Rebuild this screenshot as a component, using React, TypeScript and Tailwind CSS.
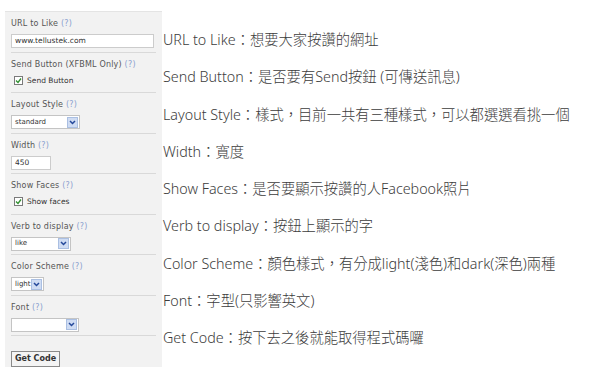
import React from 'react';

const labelFont = { fontFamily: '"DejaVu Sans", Verdana, sans-serif' };

const Help = () => <span className="text-[#8ba0cf] font-normal"> (?)</span>;

const Label: React.FC<{ text: string }> = ({ text }) => (
  <div className="text-[8px] leading-[10px] text-[#555] tracking-[0.2px]" style={labelFont}>
    {text}
    <Help />
  </div>
);

const Select: React.FC<{ value: string; width: string }> = ({ value, width }) => (
  <div className={`mt-[5px] h-[14px] bg-white border border-[#c4c4c4] flex items-center justify-between ${width}`}>
    <span className="pl-[3px] text-[7px] text-[#333]" style={labelFont}>{value}</span>
    <span className="w-[11px] h-[11px] mr-[1px] bg-[#cfdcf3] border border-[#aabfe2] flex items-center justify-center">
      <svg width="7" height="5" viewBox="0 0 7 5">
        <path d="M1 1 L3.5 3.5 L6 1" stroke="#24489a" strokeWidth="1.5" fill="none" />
      </svg>
    </span>
  </div>
);

const Check: React.FC<{ text: string }> = ({ text }) => (
  <div className="mt-[5px] ml-[3px] flex items-center gap-[4px]">
    <span className="w-[9px] h-[9px] bg-white border border-[#7a7a7a] flex items-center justify-center">
      <svg width="7" height="7" viewBox="0 0 7 7">
        <path d="M1 3.5 L3 5.5 L6 1.5" stroke="#2f8f2f" strokeWidth="1.3" fill="none" />
      </svg>
    </span>
    <span className="text-[7.5px] text-[#333]" style={labelFont}>{text}</span>
  </div>
);

const Section: React.FC<{ children: React.ReactNode }> = ({ children }) => (
  <div className="h-[41px] mx-[6px] pt-[7px] border-b border-[#d9d9d9]">{children}</div>
);

const lines = [
  'URL to Like：想要大家按讚的網址',
  'Send Button：是否要有Send按鈕 (可傳送訊息)',
  'Layout Style：樣式，目前一共有三種樣式，可以都選選看挑一個',
  'Width：寬度',
  'Show Faces：是否要顯示按讚的人Facebook照片',
  'Verb to display：按鈕上顯示的字',
  'Color Scheme：顏色樣式，有分成light(淺色)和dark(深色)兩種',
  'Font：字型(只影響英文)',
  'Get Code：按下去之後就能取得程式碼囉',
];

export default function App() {
  return (
    <div className="w-[600px] h-[371px] bg-white flex overflow-hidden">
      <div className="ml-[5px] mt-[11px] w-[157px] h-[356px] bg-[#f2f2f2] border-t border-[#e4e4e4] flex flex-col">
        <Section>
          <Label text="URL to Like" />
          <div className="mt-[5px] mr-[2px] h-[14px] bg-white border border-[#cccccc] pl-[3px] text-[7.5px] leading-[12px] text-[#333]" style={labelFont}>
            www.tellustek.com
          </div>
        </Section>
        <Section>
          <Label text="Send Button (XFBML Only)" />
          <Check text="Send Button" />
        </Section>
        <Section>
          <Label text="Layout Style" />
          <Select value="standard" width="w-[69px]" />
        </Section>
        <Section>
          <Label text="Width" />
          <div className="mt-[5px] w-[40px] h-[14px] bg-white border border-[#cccccc] pl-[3px] text-[7.5px] leading-[12px] text-[#333]" style={labelFont}>
            450
          </div>
        </Section>
        <Section>
          <Label text="Show Faces" />
          <Check text="Show faces" />
        </Section>
        <Section>
          <Label text="Verb to display" />
          <Select value="like" width="w-[60px]" />
        </Section>
        <Section>
          <Label text="Color Scheme" />
          <Select value="light" width="w-[33px]" />
        </Section>
        <Section>
          <Label text="Font" />
          <Select value="" width="w-[68px]" />
        </Section>
        <div className="mx-[6px] pt-[7px]">
          <div
            className="inline-block h-[16px] px-[3px] bg-[#f4f4f4] border border-[#8a8a8a] text-[8px] leading-[14px] font-bold text-[#333]"
            style={labelFont}
          >
            Get Code
          </div>
        </div>
      </div>
      <div
        className="ml-[1px] mt-[30px] flex flex-col gap-[17.3px] text-[14.3px] leading-[20px] font-light text-[#3c3c3c]"
        style={{ fontFamily: '"Noto Sans", "Noto Sans CJK TC", sans-serif' }}
      >
        {lines.map((l) => (
          <div key={l} className="whitespace-nowrap">{l}</div>
        ))}
      </div>
    </div>
  );
}
